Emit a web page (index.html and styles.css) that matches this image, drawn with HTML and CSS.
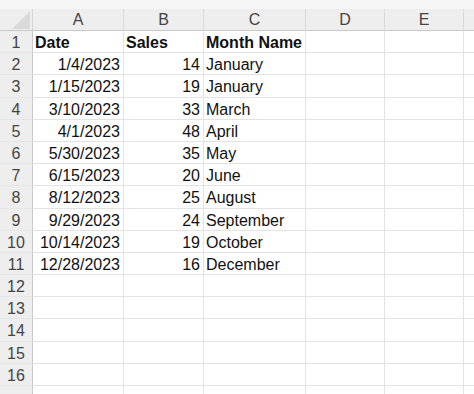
FILE: index.html
```html
<!DOCTYPE html>
<html lang="en">
<head>
  <meta charset="UTF-8">
  <title>Sales by Month</title>
  <link rel="stylesheet" href="styles.css">
</head>
<body>

  <div class="sheet">
    <div class="band"></div>

    <div class="corner"><span class="tri"></span></div>
    <div class="col-head">A</div>
    <div class="col-head">B</div>
    <div class="col-head">C</div>
    <div class="col-head">D</div>
    <div class="col-head">E</div>
    <div class="col-head edge"></div>

    <div class="row-head">1</div>
    <div class="cell bold">Date</div>
    <div class="cell bold">Sales</div>
    <div class="cell bold">Month Name</div>
    <div class="cell"></div><div class="cell"></div><div class="cell edge"></div>

    <div class="row-head">2</div>
    <div class="cell num">1/4/2023</div><div class="cell num">14</div><div class="cell">January</div>
    <div class="cell"></div><div class="cell"></div><div class="cell edge"></div>

    <div class="row-head">3</div>
    <div class="cell num">1/15/2023</div><div class="cell num">19</div><div class="cell">January</div>
    <div class="cell"></div><div class="cell"></div><div class="cell edge"></div>

    <div class="row-head">4</div>
    <div class="cell num">3/10/2023</div><div class="cell num">33</div><div class="cell">March</div>
    <div class="cell"></div><div class="cell"></div><div class="cell edge"></div>

    <div class="row-head">5</div>
    <div class="cell num">4/1/2023</div><div class="cell num">48</div><div class="cell">April</div>
    <div class="cell"></div><div class="cell"></div><div class="cell edge"></div>

    <div class="row-head">6</div>
    <div class="cell num">5/30/2023</div><div class="cell num">35</div><div class="cell">May</div>
    <div class="cell"></div><div class="cell"></div><div class="cell edge"></div>

    <div class="row-head">7</div>
    <div class="cell num">6/15/2023</div><div class="cell num">20</div><div class="cell">June</div>
    <div class="cell"></div><div class="cell"></div><div class="cell edge"></div>

    <div class="row-head">8</div>
    <div class="cell num">8/12/2023</div><div class="cell num">25</div><div class="cell">August</div>
    <div class="cell"></div><div class="cell"></div><div class="cell edge"></div>

    <div class="row-head">9</div>
    <div class="cell num">9/29/2023</div><div class="cell num">24</div><div class="cell">September</div>
    <div class="cell"></div><div class="cell"></div><div class="cell edge"></div>

    <div class="row-head">10</div>
    <div class="cell num">10/14/2023</div><div class="cell num">19</div><div class="cell">October</div>
    <div class="cell"></div><div class="cell"></div><div class="cell edge"></div>

    <div class="row-head">11</div>
    <div class="cell num">12/28/2023</div><div class="cell num">16</div><div class="cell">December</div>
    <div class="cell"></div><div class="cell"></div><div class="cell edge"></div>

    <div class="row-head">12</div>
    <div class="cell"></div><div class="cell"></div><div class="cell"></div>
    <div class="cell"></div><div class="cell"></div><div class="cell edge"></div>

    <div class="row-head">13</div>
    <div class="cell"></div><div class="cell"></div><div class="cell"></div>
    <div class="cell"></div><div class="cell"></div><div class="cell edge"></div>

    <div class="row-head">14</div>
    <div class="cell"></div><div class="cell"></div><div class="cell"></div>
    <div class="cell"></div><div class="cell"></div><div class="cell edge"></div>

    <div class="row-head">15</div>
    <div class="cell"></div><div class="cell"></div><div class="cell"></div>
    <div class="cell"></div><div class="cell"></div><div class="cell edge"></div>

    <div class="row-head">16</div>
    <div class="cell"></div><div class="cell"></div><div class="cell"></div>
    <div class="cell"></div><div class="cell"></div><div class="cell edge"></div>

    <div class="row-head"></div>
    <div class="cell"></div><div class="cell"></div><div class="cell"></div>
    <div class="cell"></div><div class="cell"></div><div class="cell edge"></div>
  </div>

</body>
</html>
```

FILE: styles.css
```css
body {
  margin: 0;
  background-color: #ffffff;
  font-family: "Liberation Sans", Arial, sans-serif;
  font-size: 16px;
  color: #111;
  overflow: hidden;
}
.sheet {
  display: grid;
  grid-template-columns: 33px 91px 80px 102px 79px 79px 1fr;
  grid-template-rows: 9px 22px repeat(17, 22.2px);
  width: 474px;
}
.band {
  grid-column: 1 / -1;
  background-color: #f6f6f6;
}
.corner {
  background-color: #eeeeee;
  border-right: 1px solid #d6d6d6;
  border-bottom: 1px solid #c9c9c9;
  position: relative;
}
.corner .tri {
  position: absolute;
  right: 2px;
  bottom: 1px;
  width: 0;
  height: 0;
  border-left: 18px solid transparent;
  border-bottom: 18px solid #d9d9d9;
}
.col-head {
  background-color: #eeeeee;
  border-right: 1px solid #dadada;
  border-bottom: 1px solid #c9c9c9;
  color: #444;
  text-align: center;
  line-height: 22px;
}
.row-head {
  background-color: #eeeeee;
  border-right: 1px solid #c9c9c9;
  border-bottom: 1px solid #e6e6e6;
  color: #444;
  text-align: center;
  padding-top: 1px;
  line-height: 22px;
}
.cell {
  border-right: 1px solid #e3e3e3;
  border-bottom: 1px solid #e3e3e3;
  padding: 1px 3px 0 2px;
  line-height: 22px;
  white-space: nowrap;
}
.cell.num {
  text-align: right;
}
.cell.bold {
  font-weight: bold;
}
.edge {
  border-right: none;
}
```
